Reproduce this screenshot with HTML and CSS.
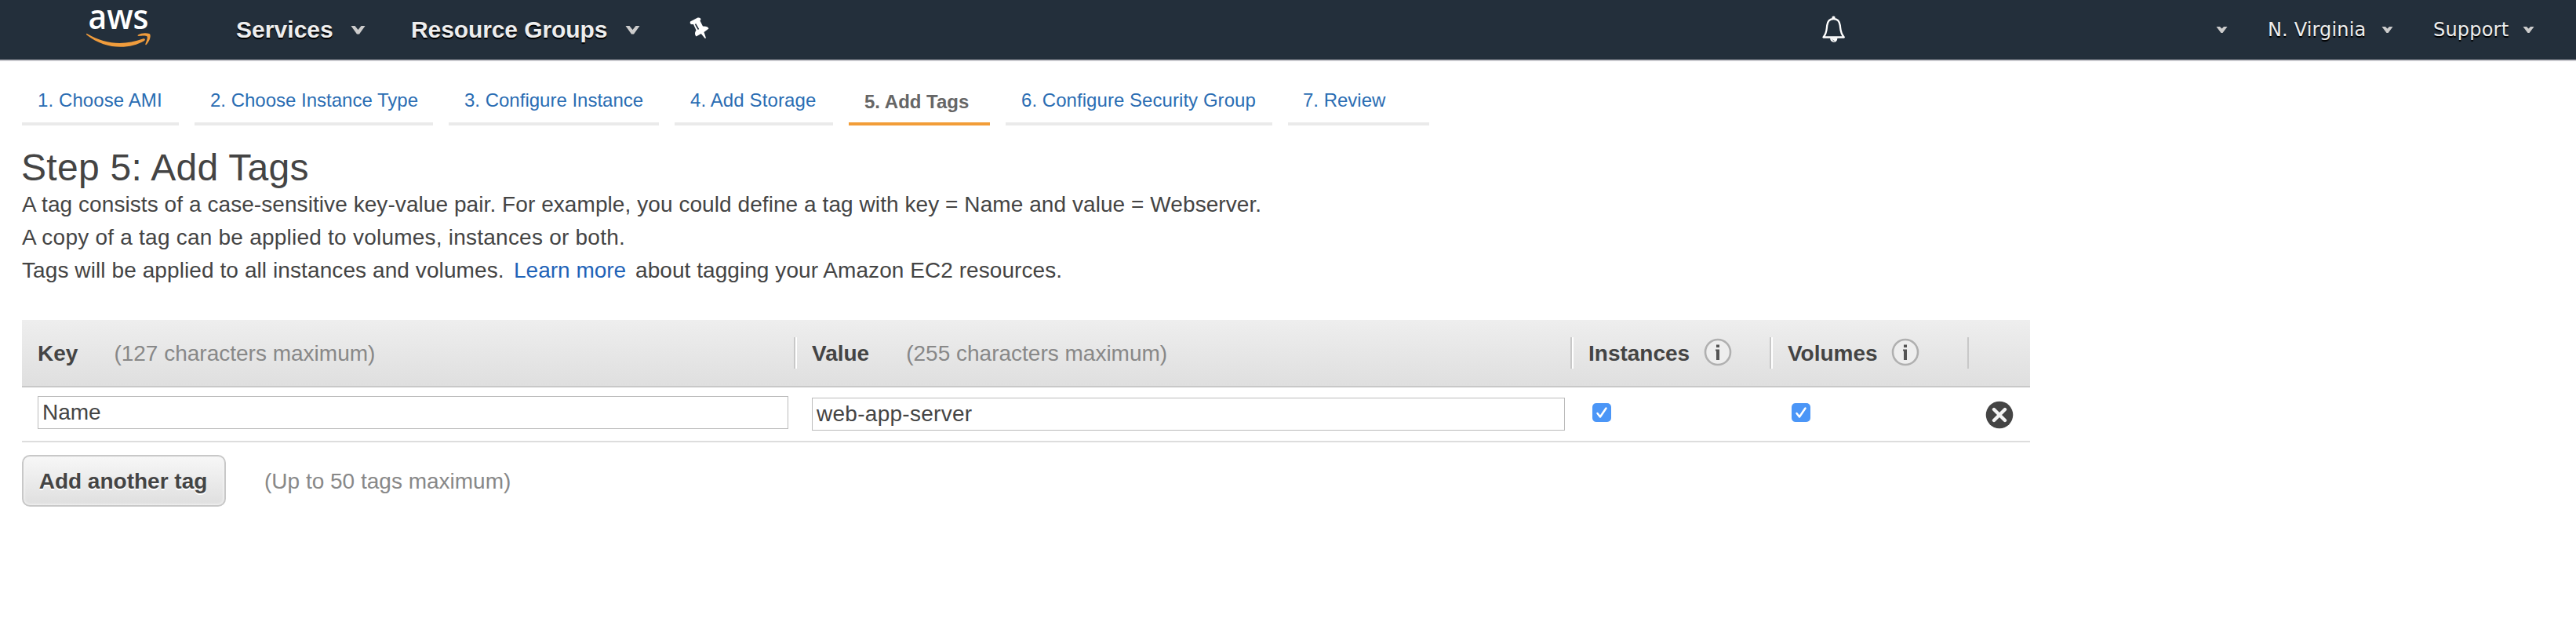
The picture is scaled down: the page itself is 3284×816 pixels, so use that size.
FILE: index.html
```
<!DOCTYPE html>
<html lang="en">
<head>
<meta charset="utf-8">
<title>Step 5: Add Tags</title>
<link rel="stylesheet" href="styles.css">
</head>
<body>
<header class="nav">
  <svg class="logo" viewBox="0 0 84 76" width="84" height="76">
    <text class="logo-text" x="2.5" y="36.500" textLength="77" lengthAdjust="spacingAndGlyphs">aws</text>
    <path fill="#f09c3c" d="M1 43C24 57 49 58 72 49.500C74.500 48.500 76 50.500 74 52C55 63 25 64 .5 44.500C-.3 43.500 0 42.500 1 43Z"/>
    <path fill="#f09c3c" d="M66 44.500C70 42 76 41.500 80.500 43C83 44 81.500 52 76.500 57C75.700 57.500 75 57 75.400 56C77 52 78.500 48 77.500 46.500C76 45 70 45.800 67 46C65.500 46 65 45.200 66 44.500Z"/>
  </svg>
  <a class="main services">Services</a>
  <svg class="caret big" viewBox="0 0 19 12"><path d="M.5 1H5.500L9.500 6L13.500 1H18.500L11 11.500H8Z"/></svg>
  <a class="main groups">Resource Groups</a>
  <svg class="caret big" viewBox="0 0 19 12"><path d="M.5 1H5.500L9.500 6L13.500 1H18.500L11 11.500H8Z"/></svg>
  <svg class="pin" viewBox="0 0 25 28" width="25" height="28"><path fill="#fff" d="M1 5.500L10.500 .6Q14 0 14.500 2.500L13.500 4.500L17 11.500Q23.500 11 24.500 14.500L18.500 19L21 26.500L19.800 27L14.800 21L8.500 24.500Q5.500 21 8.500 16.500L5 9L2.500 9Q0 8 1 5.500Z"/><path d="M7.500 8.500L11.500 15.500" stroke="#232f3b" stroke-width="1.600"/></svg>
  <svg class="bell" viewBox="0 0 32 34" width="32" height="34"><path d="M2.500 27.500C7 22 6.500 18 7.200 12.500C8 6 12 4.200 15.500 4.200C19 4.200 23 6 23.800 12.500C24.500 18 24 22 28.800 27.500Z" fill="none" stroke="#fff" stroke-width="2.300" stroke-linejoin="round"/><path d="M13.500 4V1.500Q15.500 -.5 17.500 1.500V4ZM11 28.500H20.500Q20 33.800 15.800 33.800Q11.500 33.500 11 28.500Z" fill="#fff"/><path d="M14 30.500Q15 32 16.500 32.300" stroke="#54606b" fill="none"/></svg>
  <svg class="caret account" viewBox="0 0 15 9"><path d="M.5 0H5L7.500 2.500L10 0H14.500L8.500 8H6.500Z"/></svg>
  <a class="side region">N. Virginia</a>
  <svg class="caret" viewBox="0 0 15 9"><path d="M.5 0H5L7.500 2.500L10 0H14.500L8.500 8H6.500Z"/></svg>
  <a class="side support">Support</a>
  <svg class="caret" viewBox="0 0 15 9"><path d="M.5 0H5L7.500 2.500L10 0H14.500L8.500 8H6.500Z"/></svg>
</header>

<main class="content">
  <nav class="steps">
    <a class="step ami">1. Choose AMI</a>
    <a class="step type">2. Choose Instance Type</a>
    <a class="step config">3. Configure Instance</a>
    <a class="step storage">4. Add Storage</a>
    <a class="step tags active">5. Add Tags</a>
    <a class="step security">6. Configure Security Group</a>
    <a class="step review">7. Review</a>
  </nav>

  <h1 class="title">Step 5: Add Tags</h1>
  <p class="line first">A tag consists of a case-sensitive key-value pair. For example, you could define a tag with key = Name and value = Webserver.</p>
  <p class="line second">A copy of a tag can be applied to volumes, instances or both.</p>
  <p class="line third"><span class="applied">Tags will be applied to all instances and volumes.</span><a class="learn">Learn more</a><span class="about">about tagging your Amazon EC2 resources.</span></p>

  <section class="table">
    <div class="row head">
      <div class="cell"><b>Key</b><span class="hint key-hint">(127 characters maximum)</span></div>
      <div class="cell value"><b>Value</b><span class="hint value-hint">(255 characters maximum)</span></div>
      <div class="cell instances"><b>Instances</b>
        <svg class="info" viewBox="0 0 36 36"><circle cx="18" cy="18" r="16" fill="#eee" stroke="#b0b0b0" stroke-width="2.600"/><path d="M16 8.500H20V12H16ZM15 14.500H20V28H16V16.500H15Z" fill="#555"/></svg></div>
      <div class="cell volumes"><b>Volumes</b>
        <svg class="info" viewBox="0 0 36 36"><circle cx="18" cy="18" r="16" fill="#eee" stroke="#b0b0b0" stroke-width="2.600"/><path d="M16 8.500H20V12H16ZM15 14.500H20V28H16V16.500H15Z" fill="#555"/></svg></div>
      <div class="cell last"></div>
    </div>
    <div class="row body">
      <div class="field key-field">Name</div>
      <div class="field value-field">web-app-server</div>
      <svg class="check" viewBox="0 0 24 24"><rect width="24" height="24" rx="5" fill="#4b96f7"/><path d="M6.500 13L10 17.500L17.500 6.500" fill="none" stroke="#fff" stroke-width="2.500" stroke-linecap="round" stroke-linejoin="round"/></svg>
      <svg class="check" viewBox="0 0 24 24"><rect width="24" height="24" rx="5" fill="#4b96f7"/><path d="M6.500 13L10 17.500L17.500 6.500" fill="none" stroke="#fff" stroke-width="2.500" stroke-linecap="round" stroke-linejoin="round"/></svg>
      <svg class="remove" viewBox="0 0 36 36"><circle cx="18" cy="18" r="17.300" fill="#444"/><path d="M11 11L25 25M25 11L11 25" stroke="#f4f4f4" stroke-width="4.400" stroke-linecap="round"/></svg>
    </div>
  </section>

  <div class="actions">
    <button class="add">Add another tag</button>
    <span class="hint">(Up to 50 tags maximum)</span>
  </div>
</main>
</body>
</html>
```
FILE: styles.css
```
* { box-sizing: border-box; }
body {
  margin: 0;
  background: #fff;
  color: #444;
  font: 28px/42px "Liberation Sans", Arial, sans-serif;
  white-space: nowrap;
}
svg { display: block; flex: none; }

/* Top navigation */
.nav {
  display: flex;
  align-items: center;
  height: 78px;
  padding-left: 110px;
  background: #232f3b;
  border-bottom: 2px solid #c8c8cd;
  line-height: 76px;
  color: #eee;
}
.logo { overflow: visible; }
.logo-text { font: 44px "Open Sans", sans-serif; font-weight: 600; fill: #fff; }
.main { font-size: 30px; font-weight: bold; text-shadow: 0 2px 1px #000; }
.services { width: 146px; margin-left: 107px; letter-spacing: .05px; }
.groups { width: 273px; margin-left: 58px; letter-spacing: -.1px; }
.side { font-family: "DejaVu Sans", sans-serif; font-size: 24px; text-shadow: 0 2px 1px #000; }
.caret { width: 15px; height: 9px; fill: #ccc; }
.caret.big { width: 19px; height: 12px; }
.pin { margin-left: 63px; margin-top: -4px; }
.bell { margin-left: 1418px; margin-top: -2px; }
.account { margin-left: 471px; }
.region { width: 145px; margin-left: 51px; letter-spacing: .15px; }
.support { width: 114px; margin-left: 51px; letter-spacing: .2px; }

.content { padding: 30px 28px 0; }

/* Wizard steps */
.steps { display: flex; gap: 20px; }
.step {
  height: 52px;
  padding-left: 20px;
  border-bottom: 4px solid #eaeaea;
  color: #2a6db3;
  font-size: 24px;
  line-height: 40px;
}
.ami { width: 200px; letter-spacing: .1px; }
.type { width: 304px; }
.config { width: 268px; }
.storage { width: 202px; letter-spacing: .12px; }
.tags { width: 180px; }
.security { width: 340px; letter-spacing: .05px; }
.review { width: 180px; padding-left: 19px; }
.step.active {
  padding-top: 2px;
  border-color: #f29d38;
  color: #666;
  font-weight: bold;
}

.title { margin: 29px 0 0 -1px; font-size: 48px; font-weight: normal; line-height: 50px; letter-spacing: .3px; }
.line { margin: 0; }
.first { margin-top: 1px; letter-spacing: .07px; }
.second { letter-spacing: .23px; }
.third { display: flex; }
.applied { width: 627px; letter-spacing: .09px; }
.learn { width: 155px; color: #1f63b8; }
.about { letter-spacing: .06px; }

/* Tag table */
.table { width: 2560px; margin-top: 42px; }
.row.head {
  display: grid;
  grid-template-columns: 984px 990px 254px 252px 80px;
  align-items: center;
  height: 86px;
  background: linear-gradient(#eee, #dfdfdf);
  border-bottom: 2px solid #c8c8c8;
}
.cell { display: flex; align-items: center; height: 40px; padding-left: 20px; line-height: 44px; }
.cell b, .cell .hint { padding-top: 1px; }
.cell + .cell { border-left: 2px solid #c8c8c8; box-shadow: inset 2px 0 #fff; padding-left: 21px; }
.cell.last { box-shadow: none; }
.hint { color: #888; }
.key-hint { margin-left: 46px; }
.value-hint { margin-left: 47px; }
.info { width: 36px; height: 36px; margin: -3px 0 0 18px; }
.cell.volumes { padding-left: 21px; }
.volumes .info { margin-left: 17px; }
.row.body { display: flex; height: 70px; padding-left: 20px; border-bottom: 2px solid #ddd; }
.field { height: 42px; border: 1px solid #bbb; padding-left: 5px; line-height: 40px; }
.key-field { width: 957px; margin-top: 11px; }
.value-field { width: 960px; margin: 13px 0 0 30px; letter-spacing: .28px; }
.check { width: 24px; height: 24px; margin: 20px 0 0 35px; }
.check + .check { margin-left: 230px; }
.remove { width: 36px; height: 36px; margin: 17px 0 0 223px; }

.actions { display: flex; align-items: center; gap: 49px; height: 66px; margin-top: 16px; }
.actions .hint { padding-top: 2px; }
.add {
  width: 260px;
  height: 66px;
  padding: 1px 2px 0 0;
  border: 2px solid #c8c8c8;
  border-radius: 10px;
  background: linear-gradient(#f7f7f7, #dfdfdf);
  box-shadow: inset 0 0 3px 1px #f5f5f5;
  color: #444;
  font: bold 28px/62px "Liberation Sans", Arial, sans-serif;
  text-shadow: 0 2px #fff;
}
```
